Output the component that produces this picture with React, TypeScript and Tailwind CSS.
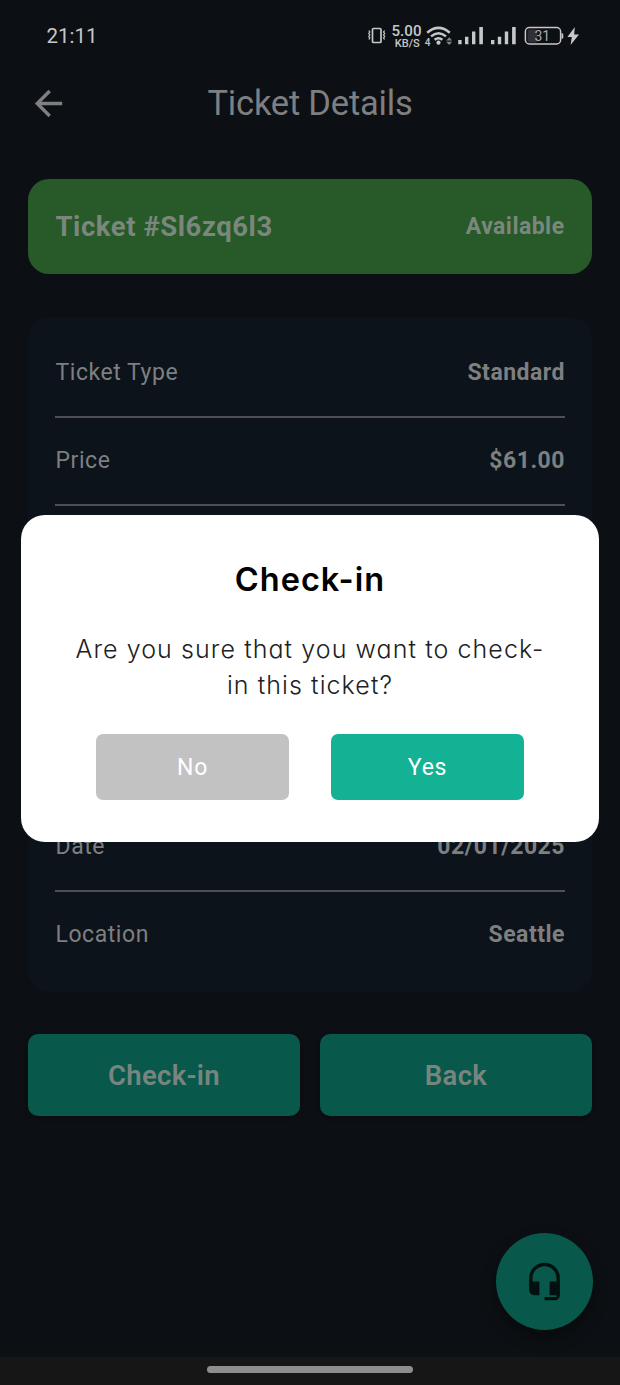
import type { ReactNode } from "react";
import { MdArrowBack, MdHeadsetMic } from "react-icons/md";

function StatusBar() {
  return (
    <header className="flex h-[72px] items-center justify-between pr-[41px] pl-[46.5px] text-[#c5c7c9]">
      <span className="text-[20.5px]">21:11</span>
      <svg width="212" height="30" viewBox="367 21 212 30" fill="none" stroke="#c5c7c9">
        <rect x="372.5" y="28.5" width="8.5" height="14" rx="1" strokeWidth="1.7" />
        <path d="M368.8 30.5l1 1.5-1 1.5 1 1.5-1 1.5 1 1.5-1 1.5M384.6 30.5l-1 1.5 1 1.5-1 1.5 1 1.5-1 1.5 1 1.5" strokeWidth="1.3" />
        <g fill="#c5c7c9" stroke="none" fontFamily="Roboto, sans-serif">
          <text x="391.5" y="36" fontSize="14" fontWeight="500" textLength="30" lengthAdjust="spacingAndGlyphs">5.00</text>
          <text x="394.7" y="46.8" fontSize="10.5" fontWeight="500" textLength="25" lengthAdjust="spacingAndGlyphs">KB/S</text>
          <text x="424.7" y="45.5" fontSize="10" fontWeight="500">4</text>
          <circle cx="438.5" cy="42.7" r="2.1" />
          <path d="M449.2 37.2l3 3.3h-6zM449.2 45l3-3.3h-6z" opacity="0.65" />
          <path d="M458.2 40h3.4v4.3h-3.4zM465 36.8h3.4v7.5h-3.4zM472 31.6h3.4v12.7h-3.4zM479.3 27h3.6v17.3h-3.6z" />
          <path d="M491 40h3.4v4.3h-3.4zM497.8 36.8h3.4v7.5h-3.4zM504.8 31.6h3.4v12.7h-3.4zM512.1 27h3.6v17.3h-3.6z" />
          <rect x="527.5" y="29.5" width="10" height="13" rx="2" fill="#303136" />
          <path d="M561.5 33q1.8 0 1.8 1.8v2.4q0 1.8-1.8 1.8z" />
          <path d="M574.8 27l-7.4 10h4.4l-1.2 8 8.4-10.6h-4.8z" />
          <text x="534.5" y="41.2" fontSize="14" fill="#a8aaad">31</text>
        </g>
        <path d="M427.2 32.7q11.3-9.6 22.6 0M431 36.4q7.5-6.4 15 0M434.6 39.8q3.9-3.2 7.8 0" strokeWidth="2.5" />
        <rect x="525.4" y="27.6" width="35.2" height="16.4" rx="4" strokeWidth="1.5" />
      </svg>
    </header>
  );
}

function DetailRow({ label, value }: { label: string; value: string }) {
  return (
    <div className="flex h-[86px] items-center justify-between pt-[1px] text-[23px]">
      <span className="pl-[0.5px] tracking-[0.55px]">{label}</span>
      <span className="font-bold tracking-[0.5px]">{value}</span>
    </div>
  );
}

function Divider() {
  return <div className="h-[2px] shrink-0 bg-[#4f4e55]" />;
}

function ActionButton({ children }: { children: ReactNode }) {
  return (
    <button className="h-[82px] flex-1 rounded-[10px] bg-[#08594b] pt-[2px] text-[27.5px] font-semibold tracking-[0.3px] text-[#78857f] shadow-[0_2px_4px_rgba(0,0,0,0.25)]">
      {children}
    </button>
  );
}

function CheckInDialog() {
  return (
    <div
      role="dialog"
      className="absolute top-[515px] left-[21px] flex h-[327px] w-[578px] flex-col items-center rounded-[24px] bg-white font-[Inter,sans-serif] [font-feature-settings:'cv11']"
    >
      <h2 className="mt-[43px] text-[32.5px] leading-[44px] font-semibold tracking-[1px] text-black">Check-in</h2>
      <p className="mt-[29px] text-center text-[25px] leading-[36px] font-light tracking-[1.08px] text-[#202124]">
        Are you sure that you want to check-
        <br />
        in this ticket?
      </p>
      <div className="mt-[31px] flex gap-[42px] font-[Roboto,sans-serif] text-[23px] tracking-[0.7px] text-white">
        <button className="h-[66px] w-[193px] rounded-[7px] bg-[#c2c2c2] pt-[2px]">No</button>
        <button className="h-[66px] w-[193px] rounded-[7px] bg-[#14b295] pt-[2px]">Yes</button>
      </div>
    </div>
  );
}

export default function App() {
  return (
    <div className="relative flex h-[1385px] w-[620px] flex-col overflow-hidden bg-[#0c0f13] font-[Roboto,sans-serif] text-[#7d7f81]">
      <StatusBar />
      <div className="grid h-[62px] grid-cols-[96px_1fr_96px] items-center">
        <MdArrowBack className="ml-[27.5px] size-[41px]" />
        <h1 className="pt-[1px] text-center text-[34.5px] leading-none tracking-[-0.2px]">Ticket Details</h1>
      </div>

      <section className="mx-[28px] mt-[45px] flex h-[95px] shrink-0 items-center justify-between rounded-[21px] bg-[#275929] px-[27.5px] font-bold text-[#7b877c]">
        <span className="text-[27.5px] tracking-[0.55px]">Ticket #Sl6zq6l3</span>
        <span className="pt-[2px] text-[23px] tracking-[0.45px]">Available</span>
      </section>

      <section className="mx-[28px] mt-[43px] flex h-[675px] shrink-0 flex-col rounded-[21px] bg-[#0c131a] px-[27px] pt-[13px] pb-[14px]">
        <DetailRow label="Ticket Type" value="Standard" />
        <Divider />
        <DetailRow label="Price" value="$61.00" />
        <Divider />
        <div className="flex-1" />
        <DetailRow label="Date" value="02/01/2025" />
        <Divider />
        <DetailRow label="Location" value="Seattle" />
      </section>

      <div className="mx-[28px] mt-[42px] flex gap-[20px]">
        <ActionButton>Check-in</ActionButton>
        <ActionButton>Back</ActionButton>
      </div>

      <footer className="mt-auto flex h-[28px] items-center justify-center bg-[#161616]">
        <div className="mt-[-3px] h-[7px] w-[206px] rounded-full bg-[#8e8e8e]" />
      </footer>

      <button
        aria-label="Support"
        className="absolute top-[1233px] left-[496px] flex size-[97px] items-center justify-center rounded-full bg-[#08594b] text-[#02110f] shadow-[0_8px_16px_rgba(0,0,0,0.3)]"
      >
        <MdHeadsetMic className="size-[41px]" />
      </button>
      <CheckInDialog />
    </div>
  );
}
